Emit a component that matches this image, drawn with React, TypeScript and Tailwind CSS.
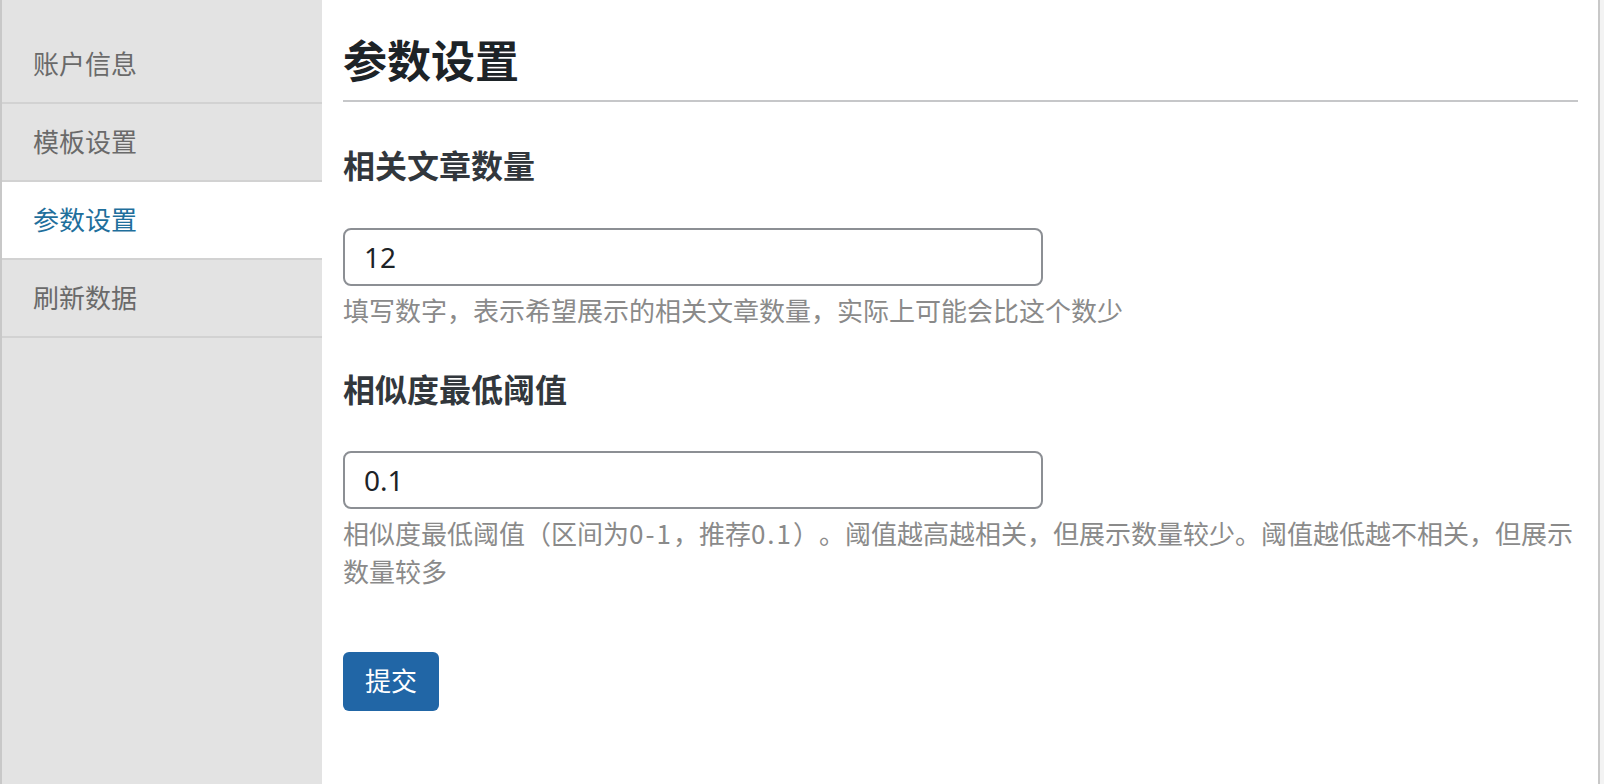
import React, { useState } from "react";

const menu = ["账户信息", "模板设置", "参数设置", "刷新数据"];

export default function App() {
  const [active, setActive] = useState(2);
  const [count, setCount] = useState("12");
  const [threshold, setThreshold] = useState("0.1");

  return (
    <div
      className="flex min-h-screen bg-[#f3f3f3]"
      style={{ fontFamily: '"Noto Sans", "Noto Sans CJK SC", sans-serif' }}
    >
      <div className="flex w-[1600px] min-h-[784px] border-x-2 border-[#c8c8c8] bg-white">
        {/* sidebar */}
        <div className="w-[320px] shrink-0 bg-[#e3e3e3] pt-[26px]">
          {menu.map((item, i) => (
            <div
              key={item}
              onClick={() => setActive(i)}
              className={
                i === active
                  ? "h-[78px] flex items-center pl-[31px] border-b-2 border-[#d2d2d2] bg-white text-[26px] text-[#1f6f9c] cursor-pointer"
                  : "h-[78px] flex items-center pl-[31px] border-b-2 border-[#d2d2d2] text-[26px] text-[#6a6a6a] cursor-pointer"
              }
            >
              {item}
            </div>
          ))}
        </div>

        {/* main */}
        <div className="flex-1 pl-[21px] pr-5 pt-[33px]">
          <h2 className="text-[44px] leading-[56px] font-bold text-[#1d2327] pb-[11px] border-b-2 border-[#c6c7c9]">
            参数设置
          </h2>

          <form onSubmit={(e) => e.preventDefault()} className="flex flex-col">
            <h3 className="mt-[42px] text-[32px] leading-[44px] font-bold text-[#32373c]">
              相关文章数量
            </h3>
            <input
              type="text"
              value={count}
              onChange={(e) => setCount(e.target.value)}
              className="mt-[40px] w-[700px] h-[58px] rounded-lg border-2 border-[#8c8f94] px-[19px] text-[28px] text-[#1d2327] outline-none"
            />
            <p className="mt-[5px] text-[26px] leading-[38px] text-[#8a8a8a] font-['Noto_Sans_CJK_SC',sans-serif] [text-spacing-trim:space-all]">
              填写数字，表示希望展示的相关文章数量，实际上可能会比这个数少
            </p>

            <h3 className="mt-[39px] text-[32px] leading-[44px] font-bold text-[#32373c]">
              相似度最低阈值
            </h3>
            <input
              type="text"
              value={threshold}
              onChange={(e) => setThreshold(e.target.value)}
              className="mt-[39px] w-[700px] h-[58px] rounded-lg border-2 border-[#8c8f94] px-[19px] text-[28px] text-[#1d2327] outline-none"
            />
            <p className="mt-[5px] text-[26px] leading-[38px] text-[#8a8a8a] font-['Noto_Sans_CJK_SC',sans-serif] [text-spacing-trim:space-all]">
              相似度最低阈值（区间为<span className="tracking-[2px]">0-1</span>，推荐
              <span className="tracking-[2px]">0.1</span>）。阈值越高越相关，但展示数量较少。阈值越低越不相关，但展示
              <br />
              数量较多
            </p>

            <div className="mt-[62px]">
              <button
                type="submit"
                className="w-[96px] h-[59px] rounded-md bg-[#2166a6] text-[26px] text-white"
              >
                提交
              </button>
            </div>
          </form>
        </div>
      </div>
    </div>
  );
}
